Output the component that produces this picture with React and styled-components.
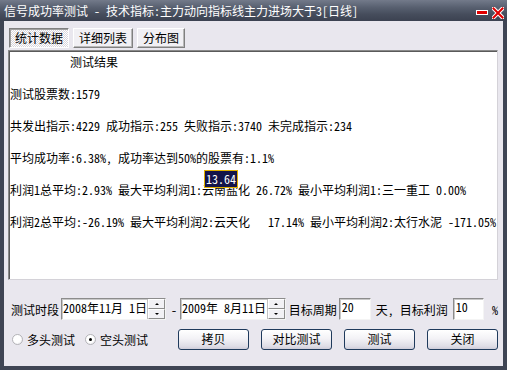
import React from 'react';
import styled, { createGlobalStyle } from 'styled-components';

const GlobalStyle = createGlobalStyle`
  html, body {
    margin: 0;
    padding: 0;
    background: #3e4453;
  }
  body {
    font-family: "Noto Sans Mono CJK SC", "Noto Sans CJK SC", "Liberation Mono", monospace;
    font-size: 12px;
  }
`;

const FONT = `"Noto Sans Mono CJK SC", "Noto Sans CJK SC", "Liberation Mono", monospace`;

const Window = styled.div`
  width: 507px;
  height: 370px;
  display: flex;
  flex-direction: column;
  background: #3f4554;
  box-sizing: border-box;
  overflow: hidden;
`;

const TitleBar = styled.div`
  height: 21px;
  flex-shrink: 0;
  display: flex;
  align-items: center;
  padding: 0 3px 0 4px;
  background: linear-gradient(#737a8a 0%, #586070 35%, #454c5b 70%, #3c4251 100%);
  color: #fff;
  font-family: ${FONT};
  font-size: 12px;
  white-space: pre;
`;

const TitleText = styled.span`
  flex: 1;
  line-height: 21px;
`;

const TitleButtons = styled.div`
  display: flex;
  align-items: center;
  gap: 4px;
  margin-top: 4px;
`;

const Client = styled.div`
  flex: 1;
  margin: 0 4px 4px 4px;
  background: #e9e7ee;
  display: flex;
  flex-direction: column;
  padding: 7px 5px 0 4px;
  box-sizing: border-box;
`;

const TabRow = styled.div`
  display: flex;
  gap: 4px;
  margin-left: 1px;
  height: 20px;
`;

const Tab = styled.div`
  height: 20px;
  box-sizing: border-box;
  padding: 0 5px;
  line-height: 18px;
  font-size: 12px;
  color: #000;
  border: 1px solid;
  border-color: ${p => (p.$active ? '#808080 #ffffff #ffffff #808080' : '#ffffff #808080 #808080 #ffffff')};
  box-shadow: ${p => (p.$active ? 'inset 1px 1px 0 #a0a0a0' : 'inset -1px -1px 0 #b8b8b8')};
  background: ${p =>
    p.$active
      ? 'repeating-conic-gradient(#ffffff 0 25%, #d8d6dc 0 50%) 0 0 / 2px 2px'
      : '#f1f0f4'};
`;

const Panel = styled.div`
  position: relative;
  margin-top: 2px;
  height: 230px;
  box-sizing: border-box;
  background: #fff;
  border: 1px solid;
  border-color: #8a8a8a #d4d2d8 #d4d2d8 #8a8a8a;
  box-shadow: inset 1px 1px 0 #5a5a5a;
  padding: 3px 0 0 1px;
`;

const Report = styled.div`
  white-space: pre;
  font-size: 12px;
  line-height: 16px;
  color: #000;
`;

const Line = styled.div`
  height: 16px;
`;

const Tip = styled.div`
  position: absolute;
  left: 195px;
  top: 119px;
  width: 34px;
  height: 18px;
  box-sizing: border-box;
  background: #14144a;
  border: 1px solid #e0b000;
  color: #fff;
  font-size: 12px;
  line-height: 16px;
  text-align: center;
`;

const FieldRow = styled.div`
  display: flex;
  align-items: center;
  margin-top: 18px;
  height: 22px;
  padding-left: 3px;
`;

const Label = styled.span`
  font-size: 12px;
  color: #000;
  white-space: pre;
  margin-left: ${p => p.$ml || 0}px;
`;

const DateBox = styled.div`
  display: flex;
  align-items: stretch;
  width: ${p => p.$w}px;
  height: 22px;
  margin-left: ${p => p.$ml || 0}px;
  box-sizing: border-box;
  border: 1px solid;
  border-color: #8c8c8c #f4f4f4 #f4f4f4 #8c8c8c;
  box-shadow: inset 1px 1px 0 #c8c8c8;
  background: #fff;
`;

const DateText = styled.span`
  flex: 1;
  padding-left: 1px;
  font-size: 12px;
  line-height: 18px;
  white-space: pre;
`;

const Spinner = styled.div`
  width: 17px;
  display: flex;
  flex-direction: column;
  background: #e9e7ee;
  border-left: 1px solid #c0c0c0;
`;

const SpinHalf = styled.div`
  flex: 1;
  display: flex;
  align-items: center;
  justify-content: center;
  border: 1px solid;
  border-color: #ffffff #8c8c8c #8c8c8c #ffffff;
  background: #f2f1f5;
  &::after {
    content: '';
    width: 0;
    height: 0;
    border-left: 2px solid transparent;
    border-right: 2px solid transparent;
    ${p => (p.$up ? 'border-bottom: 2px solid #000;' : 'border-top: 2px solid #000;')}
  }
`;

const NumInput = styled.div`
  width: ${p => p.$w}px;
  height: 22px;
  margin-left: ${p => p.$ml || 0}px;
  box-sizing: border-box;
  border: 1px solid;
  border-color: #8c8c8c #f4f4f4 #f4f4f4 #8c8c8c;
  box-shadow: inset 1px 1px 0 #c8c8c8;
  background: #fff;
  padding-left: 2px;
  font-size: 12px;
  line-height: 16px;
`;

const ActionRow = styled.div`
  display: flex;
  align-items: center;
  margin-top: 9px;
  height: 21px;
  padding-left: 4px;
`;

const RadioItem = styled.label`
  display: flex;
  align-items: center;
  gap: 4px;
  margin-left: ${p => p.$ml || 0}px;
  font-size: 12px;
  color: #000;
`;

const RadioDot = styled.span`
  width: 11px;
  height: 11px;
  border-radius: 50%;
  box-sizing: border-box;
  border: 1px solid #b4b4b8;
  background: radial-gradient(circle at 40% 40%, #ffffff 50%, #e0dfe4 100%);
  display: flex;
  align-items: center;
  justify-content: center;
  &::after {
    content: '';
    width: 3px;
    height: 3px;
    border-radius: 50%;
    background: ${p => (p.$checked ? '#000' : 'transparent')};
  }
`;

const Buttons = styled.div`
  display: flex;
  gap: 12px;
  margin-left: auto;
`;

const Button = styled.div`
  width: 71px;
  height: 21px;
  box-sizing: border-box;
  border: 1px solid #1f3a5c;
  border-radius: 3px;
  background: linear-gradient(#ffffff 0%, #f3f2f6 45%, #dedde6 85%, #cfcdd9 100%);
  font-size: 12px;
  line-height: 18px;
  text-align: center;
  color: #000;
`;

const MinIcon = () => (
  <svg width="12" height="5" viewBox="0 0 12 5">
    <rect x="0.5" y="0.5" width="11" height="4" fill="#e00000" stroke="#fff" />
  </svg>
);

const CloseIcon = () => (
  <svg width="12" height="12" viewBox="0 0 12 12">
    <path d="M1.5 1.5 L10.5 10.5 M10.5 1.5 L1.5 10.5" stroke="#fff" strokeWidth="4" strokeLinecap="square" />
    <path d="M1.5 1.5 L10.5 10.5 M10.5 1.5 L1.5 10.5" stroke="#e00000" strokeWidth="2" strokeLinecap="square" />
  </svg>
);

const lines = [
  '          测试结果',
  '',
  '测试股票数:1579',
  '',
  '共发出指示:4229 成功指示:255 失败指示:3740 未完成指示:234',
  '',
  '平均成功率:6.38%, 成功率达到50%的股票有:1.1%',
  '',
  '利润1总平均:2.93% 最大平均利润1:云南盐化 26.72% 最小平均利润1:三一重工 0.00%',
  '',
  '利润2总平均:-26.19% 最大平均利润2:云天化   17.14% 最小平均利润2:太行水泥 -171.05%',
];

const Spin = () => (
  <Spinner>
    <SpinHalf $up />
    <SpinHalf />
  </Spinner>
);

export default function App() {
  return (
    <>
      <GlobalStyle />
      <Window>
        <TitleBar>
          <TitleText>信号成功率测试 - 技术指标:主力动向指标线主力进场大于3[日线]</TitleText>
          <TitleButtons>
            <MinIcon />
            <CloseIcon />
          </TitleButtons>
        </TitleBar>
        <Client>
          <TabRow>
            <Tab $active>统计数据</Tab>
            <Tab>详细列表</Tab>
            <Tab>分布图</Tab>
          </TabRow>
          <Panel>
            <Report>
              {lines.map((l, i) => (
                <Line key={i}>{l}</Line>
              ))}
            </Report>
            <Tip>13.64</Tip>
          </Panel>
          <FieldRow>
            <Label>测试时段</Label>
            <DateBox $w={108} $ml={2}>
              <DateText>2008年11月 1日</DateText>
              <Spin />
            </DateBox>
            <Label $ml={5}>-</Label>
            <DateBox $w={109} $ml={3}>
              <DateText>2009年 8月11日</DateText>
              <Spin />
            </DateBox>
            <Label $ml={3}>目标周期</Label>
            <NumInput $w={33} $ml={2}>20</NumInput>
            <Label $ml={5}>天, 目标利润</Label>
            <NumInput $w={32} $ml={5}>10</NumInput>
            <Label $ml={8}>%</Label>
          </FieldRow>
          <ActionRow>
            <RadioItem>
              <RadioDot />
              多头测试
            </RadioItem>
            <RadioItem $ml={10}>
              <RadioDot $checked />
              空头测试
            </RadioItem>
            <Buttons>
              <Button>拷贝</Button>
              <Button>对比测试</Button>
              <Button>测试</Button>
              <Button>关闭</Button>
            </Buttons>
          </ActionRow>
        </Client>
      </Window>
    </>
  );
}
